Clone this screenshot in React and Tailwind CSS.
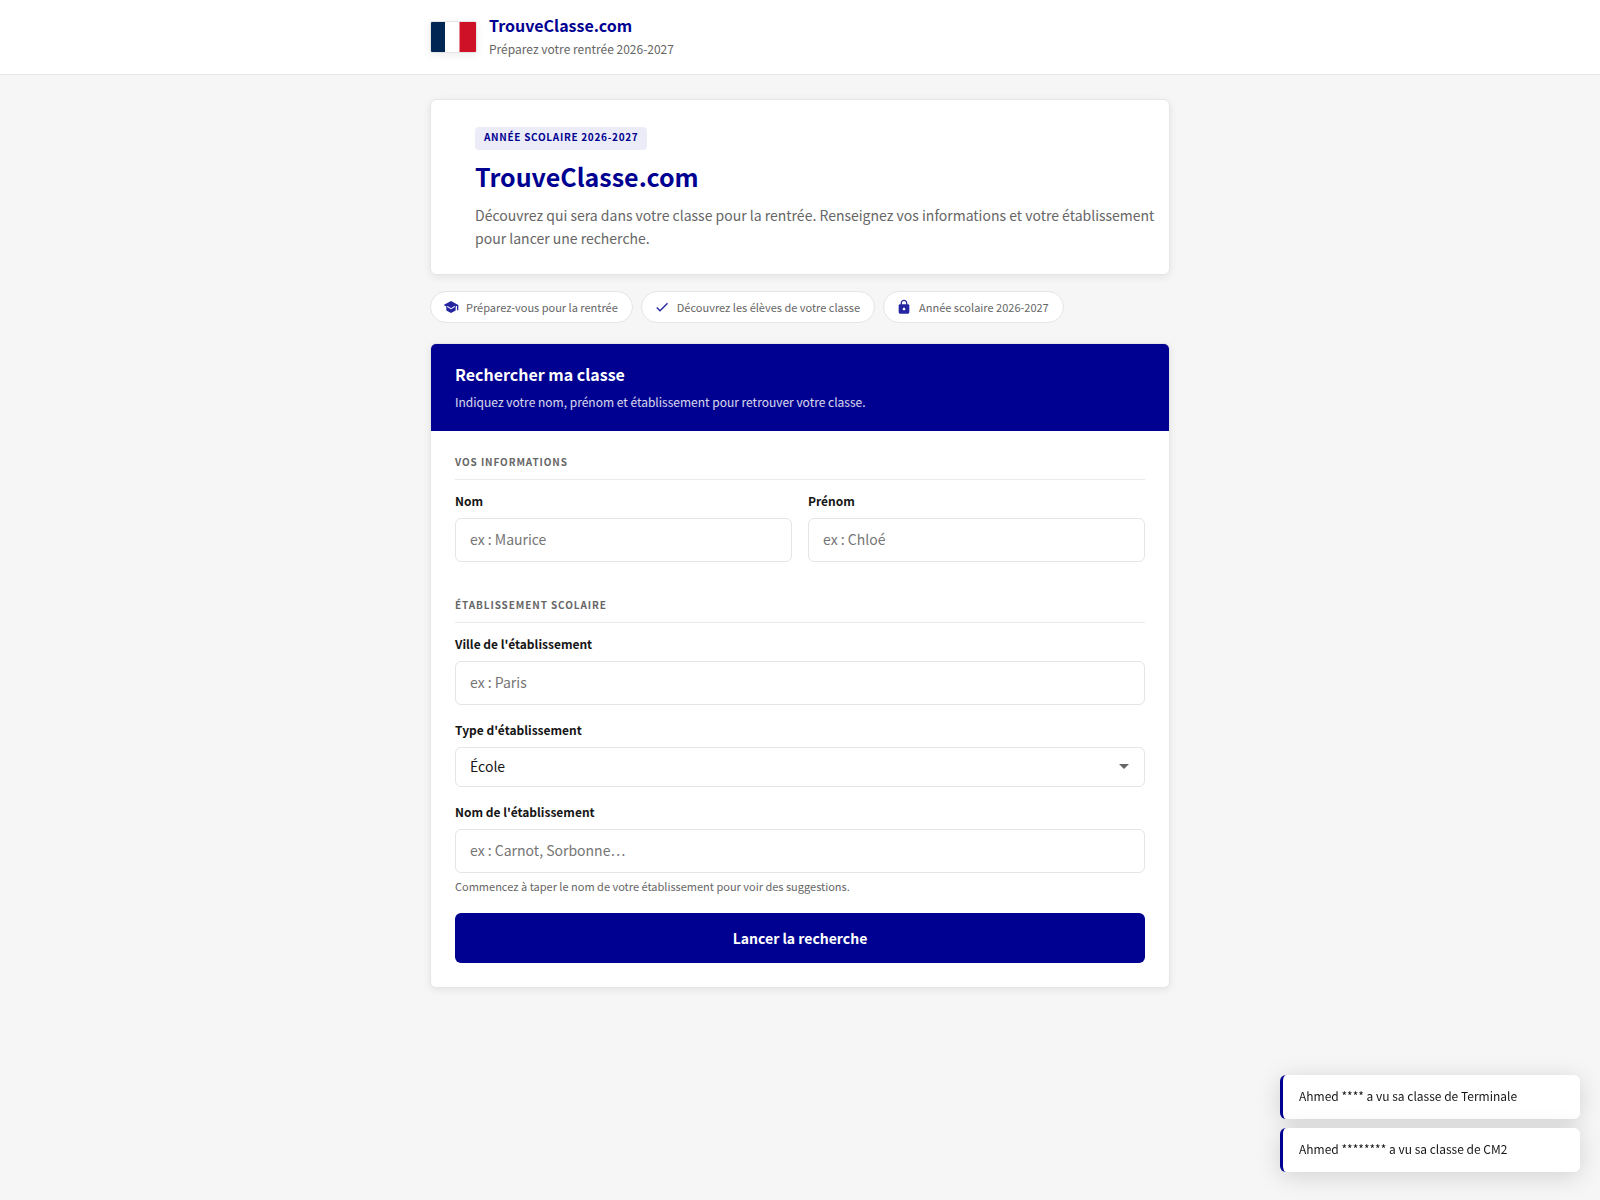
import React, { useState } from "react";
import { MdCheck, MdLock } from "react-icons/md";

const CapIcon = (props) => (
  <svg viewBox="0 0 24 24" fill="currentColor" fillRule="evenodd" {...props}>
    <path d="M12 3L1 9l4 2.18v6L12 21l7-3.82v-6l2-1.09V17h2V9L12 3zM6.4 10L12 13.8l5.6-3.8v1.9L12 15.2l-5.6-3.3z" />
  </svg>
);

const pills = [
  { text: "Préparez-vous pour la rentrée", icon: CapIcon },
  { text: "Découvrez les élèves de votre classe", icon: MdCheck },
  { text: "Année scolaire 2026-2027", icon: MdLock },
];

const toasts = [
  "Ahmed **** a vu sa classe de Terminale",
  "Ahmed ******** a vu sa classe de CM2",
];

const Flag = () => (
  <svg
    viewBox="0 0 45 30"
    className="box-content h-[30px] w-[45px] shrink-0 rounded-xs border border-[#e5e5e5] shadow-[0_2px_8px_rgba(0,0,0,0.08)]"
    aria-hidden="true"
  >
    <rect width="45" height="30" fill="#fff" />
    <rect width="14" height="30" fill="#002654" />
    <rect x="28.5" width="16.5" height="30" fill="#ce1126" />
  </svg>
);

const SectionTitle = ({ children }) => (
  <h3 className="mb-3 border-b border-[#ebebeb] pb-[10px] text-[10px] leading-[14px] font-bold tracking-[0.09em] text-[#666] uppercase">
    {children}
  </h3>
);

const Field = ({ id, label, children }) => (
  <div>
    <label htmlFor={id} className="mb-2 block text-xs leading-[18px] font-semibold text-[#161616]">
      {label}
    </label>
    {children}
  </div>
);

const TextInput = ({ id, placeholder }) => (
  <input
    id={id}
    type="text"
    placeholder={placeholder}
    className="block h-11 w-full rounded-md border border-[#e5e5e5] bg-white px-[14px] pb-[2px] text-sm text-[#161616] placeholder:text-[#757575]"
  />
);

const App = () => {
  const [type, setType] = useState("ecole");

  return (
    <div className="min-h-screen bg-[#f6f6f6] font-['Noto_Sans_CJK_SC',sans-serif] text-[#161616]">
      <header className="border-b border-[#e5e5e5] bg-white">
        <div className="mx-auto flex max-w-[780px] items-center gap-3 px-5 py-[14px]">
          <Flag />
          <div>
            <p className="text-base leading-[22px] font-bold text-[#000091]">TrouveClasse.com</p>
            <p className="mt-[2px] text-xs leading-[22px] text-[#666]">Préparez votre rentrée 2026-2027</p>
          </div>
        </div>
      </header>

      <main className="mx-auto max-w-[780px] px-5 py-6">
        <section className="rounded-md border border-[#e5e5e5] bg-white pt-[27px] pr-2 pb-6 pl-11 shadow-[0_2px_8px_rgba(0,0,0,0.08)]">
          <p className="w-fit rounded-sm bg-[#ececf8] px-[9px] pb-[3px] text-[10px] leading-5 font-bold tracking-[0.07em] text-[#000091] uppercase">
            Année scolaire 2026-2027
          </p>
          <h1 className="mt-2 text-[25px] leading-9 font-bold text-[#000091]">TrouveClasse.com</h1>
          <p className="mt-[10px] text-sm leading-[23px] text-[#666]">
            Découvrez qui sera dans votre classe pour la rentrée. Renseignez vos informations et votre
            établissement pour lancer une recherche.
          </p>
        </section>

        <ul className="mt-4 flex flex-wrap gap-2">
          {pills.map(({ text, icon: Icon }) => (
            <li
              key={text}
              className="flex h-8 items-center gap-[7px] rounded-full border border-[#e5e5e5] bg-white pr-[14px] pb-px pl-3 text-[11px] leading-4 text-[#666]"
            >
              <Icon className="size-4 text-[#000091] opacity-85" aria-hidden="true" />
              {text}
            </li>
          ))}
        </ul>

        {/* Search form */}
        <section className="mt-5 overflow-hidden rounded-md border border-[#e5e5e5] bg-white shadow-[0_2px_8px_rgba(0,0,0,0.08)]">
          <div className="bg-[#000091] px-6 py-[19px]">
            <h2 className="text-base leading-[22px] font-bold text-white">Rechercher ma classe</h2>
            <p className="mt-[7px] text-xs leading-5 text-white/85">
              Indiquez votre nom, prénom et établissement pour retrouver votre classe.
            </p>
          </div>

          <form className="p-6" onSubmit={(e) => e.preventDefault()}>
            <SectionTitle>Vos informations</SectionTitle>
            <div className="mb-9 grid grid-cols-1 gap-4 sm:grid-cols-2">
              <Field id="nom" label="Nom">
                <TextInput id="nom" placeholder="ex : Maurice" />
              </Field>
              <Field id="prenom" label="Prénom">
                <TextInput id="prenom" placeholder="ex : Chloé" />
              </Field>
            </div>

            <SectionTitle>Établissement scolaire</SectionTitle>
            <div className="flex flex-col gap-4">
              <Field id="ville" label="Ville de l'établissement">
                <TextInput id="ville" placeholder="ex : Paris" />
              </Field>
              <Field id="type" label="Type d'établissement">
                <div className="relative">
                  <select
                    id="type"
                    value={type}
                    onChange={(e) => setType(e.target.value)}
                    className="block h-10 w-full appearance-none rounded-md border border-[#e5e5e5] bg-white px-[14px] pb-[2px] text-sm text-[#161616]"
                  >
                    <option value="ecole">École</option>
                    <option value="college">Collège</option>
                    <option value="lycee">Lycée</option>
                  </select>
                  <svg
                    viewBox="0 0 10 5"
                    className="pointer-events-none absolute top-[17px] right-4 h-[5px] w-[10px] fill-[#666]"
                    aria-hidden="true"
                  >
                    <path d="M0 0h10L5 5z" />
                  </svg>
                </div>
              </Field>
              <Field id="etablissement" label="Nom de l'établissement">
                <TextInput id="etablissement" placeholder="ex : Carnot, Sorbonne…" />
                <p className="mt-[5px] text-[11px] leading-4 text-[#666]">
                  Commencez à taper le nom de votre établissement pour voir des suggestions.
                </p>
              </Field>
            </div>

            <button
              type="submit"
              className="mt-[19px] h-[50px] w-full rounded-md bg-[#000091] pb-px text-sm font-bold text-white"
            >
              Lancer la recherche
            </button>
          </form>
        </section>
      </main>

      <div className="fixed right-5 bottom-7 flex w-[300px] flex-col gap-[9px]">
        {toasts.map((toast) => (
          <div
            key={toast}
            className="rounded-md border-l-3 border-[#000091] bg-white px-4 pt-3 pb-[14px] text-xs leading-[18px] shadow-[0_4px_24px_rgba(0,0,0,0.15)]"
          >
            {toast}
          </div>
        ))}
      </div>
    </div>
  );
};

export default App;
